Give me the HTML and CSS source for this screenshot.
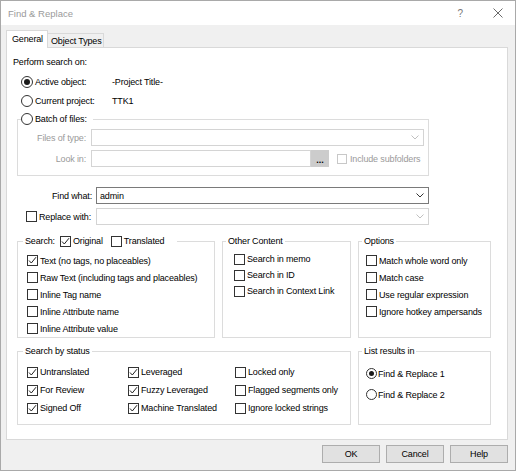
FILE: index.html
```html
<!DOCTYPE html>
<html>
<head>
<meta charset="utf-8">
<title>Find &amp; Replace</title>
<link rel="stylesheet" href="styles.css">
</head>
<body>
<div class="window">
  <div class="titlebar">
    <span class="title">Find &amp; Replace</span>
    <span class="help">?</span>
    <svg class="close" width="10" height="10" viewBox="0 0 10 10"><path d="M0.5 0.5 L9.5 9.5 M9.5 0.5 L0.5 9.5" stroke="#6a6a6a" stroke-width="1" fill="none"/></svg>
  </div>
  <div class="body">
    <div class="tabs">
      <div class="tab active">General</div>
      <div class="tab second">Object Types</div>
    </div>
    <div class="panel">
      <div class="heading">Perform search on:</div>
      <div class="scope">
        <span class="radio big checked"></span><span>Active object:</span><span class="scope-value">-Project Title-</span>
        <span class="radio big"></span><span>Current project:</span><span class="scope-value">TTK1</span>
      </div>

      <fieldset class="group batch">
        <legend class="legend"><span class="legend-row"><span class="radio big"></span><span class="gap2">Batch of files:</span></span></legend>
        <div class="batch-grid">
          <span class="field-label muted">Files of type:</span>
          <div class="combo disabled"><span></span><svg class="chev" width="8" height="5" viewBox="0 0 8 5"><path d="M0.5 0.5 L4 4 L7.5 0.5" stroke="#c0c0c0" fill="none"/></svg></div>
          <span class="field-label muted">Look in:</span>
          <div class="lookin">
            <div class="input disabled"></div>
            <div class="browse">...</div>
            <span class="check small disabled"></span><span class="muted">Include subfolders</span>
          </div>
        </div>
      </fieldset>

      <div class="find-grid">
        <span class="field-label">Find what:</span>
        <div class="combo"><span class="combo-text">admin</span><svg class="chev" width="8" height="5" viewBox="0 0 8 5"><path d="M0.5 0.5 L4 4 L7.5 0.5" stroke="#333" fill="none"/></svg></div>
        <span class="item replace"><span class="check"></span>Replace with:</span>
        <div class="combo disabled"><span></span><svg class="chev" width="8" height="5" viewBox="0 0 8 5"><path d="M0.5 0.5 L4 4 L7.5 0.5" stroke="#c0c0c0" fill="none"/></svg></div>
      </div>

      <div class="groups top-groups">
        <fieldset class="group">
          <legend class="legend legend-search"><span class="legend-row"><span class="search-word">Search:</span><span class="check checked"><svg width="9" height="9" viewBox="0 0 9 9"><path d="M1 4.5 L3.3 7 L8 1.2" stroke="#222" stroke-width="1" fill="none"/></svg></span><span class="legend-opt">Original</span><span class="check"></span><span class="legend-opt">Translated</span></span></legend>
          <div class="list search-list">
            <span class="item"><span class="check checked"><svg width="9" height="9" viewBox="0 0 9 9"><path d="M1 4.5 L3.3 7 L8 1.2" stroke="#222" stroke-width="1" fill="none"/></svg></span>Text (no tags, no placeables)</span>
            <span class="item"><span class="check"></span>Raw Text (including tags and placeables)</span>
            <span class="item"><span class="check"></span>Inline Tag name</span>
            <span class="item"><span class="check"></span>Inline Attribute name</span>
            <span class="item"><span class="check"></span>Inline Attribute value</span>
          </div>
        </fieldset>
        <fieldset class="group">
          <legend class="legend legend-small">Other Content</legend>
          <div class="list other-list">
            <span class="item"><span class="check"></span>Search in memo</span>
            <span class="item"><span class="check"></span>Search in ID</span>
            <span class="item"><span class="check"></span>Search in Context Link</span>
          </div>
        </fieldset>
        <fieldset class="group">
          <legend class="legend legend-small">Options</legend>
          <div class="list options-list">
            <span class="item"><span class="check"></span>Match whole word only</span>
            <span class="item"><span class="check"></span>Match case</span>
            <span class="item"><span class="check"></span>Use regular expression</span>
            <span class="item"><span class="check"></span>Ignore hotkey ampersands</span>
          </div>
        </fieldset>
      </div>

      <div class="groups bottom-groups">
        <fieldset class="group status">
          <legend class="legend">Search by status</legend>
          <div class="status-grid">
            <span class="item"><span class="check checked"><svg width="9" height="9" viewBox="0 0 9 9"><path d="M1 4.5 L3.3 7 L8 1.2" stroke="#222" stroke-width="1" fill="none"/></svg></span>Untranslated</span>
            <span class="item"><span class="check checked"><svg width="9" height="9" viewBox="0 0 9 9"><path d="M1 4.5 L3.3 7 L8 1.2" stroke="#222" stroke-width="1" fill="none"/></svg></span>Leveraged</span>
            <span class="item"><span class="check"></span>Locked only</span>
            <span class="item"><span class="check checked"><svg width="9" height="9" viewBox="0 0 9 9"><path d="M1 4.5 L3.3 7 L8 1.2" stroke="#222" stroke-width="1" fill="none"/></svg></span>For Review</span>
            <span class="item"><span class="check checked"><svg width="9" height="9" viewBox="0 0 9 9"><path d="M1 4.5 L3.3 7 L8 1.2" stroke="#222" stroke-width="1" fill="none"/></svg></span>Fuzzy Leveraged</span>
            <span class="item"><span class="check"></span>Flagged segments only</span>
            <span class="item"><span class="check checked"><svg width="9" height="9" viewBox="0 0 9 9"><path d="M1 4.5 L3.3 7 L8 1.2" stroke="#222" stroke-width="1" fill="none"/></svg></span>Signed Off</span>
            <span class="item"><span class="check checked"><svg width="9" height="9" viewBox="0 0 9 9"><path d="M1 4.5 L3.3 7 L8 1.2" stroke="#222" stroke-width="1" fill="none"/></svg></span>Machine Translated</span>
            <span class="item"><span class="check"></span>Ignore locked strings</span>
          </div>
        </fieldset>
        <fieldset class="group">
          <legend class="legend legend-small">List results in</legend>
          <div class="list results-list">
            <span class="item"><span class="radio checked"></span>Find &amp; Replace 1</span>
            <span class="item"><span class="radio"></span>Find &amp; Replace 2</span>
          </div>
        </fieldset>
      </div>
    </div>
    <div class="actions">
      <div class="btn">OK</div>
      <div class="btn">Cancel</div>
      <div class="btn">Help</div>
    </div>
  </div>
</div>
</body>
</html>
```

FILE: styles.css
```css
* { box-sizing: border-box; }
html, body { margin: 0; padding: 0; }
body {
  font-family: "Liberation Sans", Arial, sans-serif;
  font-size: 9px;
  letter-spacing: -0.15px;
  color: #000000;
  background: #ffffff;
}
.window {
  width: 516px;
  height: 471px;
  border: 1px solid #a9a9a9;
  display: flex;
  flex-direction: column;
  background: #f0f0f0;
}
.titlebar {
  height: 24px;
  flex: none;
  background: #ffffff;
  display: flex;
  align-items: center;
  padding-left: 7px;
}
.title { flex: 1; font-size: 9.5px; letter-spacing: 0; color: #9a9a9a; }
.help { color: #777; font-size: 10px; letter-spacing: 0; margin-right: 30px; }
.close { display: block; margin-right: 12px; }

.body {
  flex: 1;
  display: flex;
  flex-direction: column;
  padding: 0 7px 0 5px;
}
.tabs { height: 22px; flex: none; display: flex; align-items: flex-end; }
.tab {
  height: 14px;
  border: 1px solid #d9d9d9;
  border-bottom: none;
  background: #f0f0f0;
  display: flex;
  align-items: center;
  padding-left: 3px;
}
.tab.active {
  width: 42px;
  height: 18px;
  margin-bottom: -1px;
  padding-left: 5px;
  padding-bottom: 1px;
  background: #ffffff;
  position: relative;
  z-index: 1;
}
.tab.second { width: 57px; margin-left: -1px; }

.panel {
  height: 393px;
  flex: none;
  background: #ffffff;
  border: 1px solid #d9d9d9;
}
.heading { height: 14px; line-height: 14px; margin: 7px 0 0 6px; }
.scope {
  display: grid;
  grid-template-columns: 12px 75px auto;
  column-gap: 2px;
  grid-auto-rows: 19px;
  align-items: center;
  margin: 3px 0 0 14px;
}

.radio {
  width: 11px;
  height: 11px;
  border: 1px solid #333;
  border-radius: 50%;
  background: #fff;
  display: inline-flex;
  align-items: center;
  justify-content: center;
  flex: none;
  margin-right: 1px;
}
.radio.big { width: 12px; height: 12px; margin-right: 0; }
.radio.checked::after {
  content: "";
  width: 5px;
  height: 5px;
  border-radius: 50%;
  background: #1a1a1a;
}
.radio.big.checked::after { width: 6px; height: 6px; }

.check {
  width: 11px;
  height: 11px;
  border: 1px solid #333;
  background: #fff;
  display: inline-flex;
  align-items: center;
  justify-content: center;
  flex: none;
  margin-right: 2px;
}
.check svg { display: block; }
.check.small { width: 10px; height: 10px; }
.check.disabled { border-color: #c8c8c8; }

fieldset.group {
  margin: 0;
  padding: 0;
  min-width: 0;
  border: 1px solid #dcdcdc;
}
.legend {
  height: 14px;
  line-height: 14px;
  padding: 0 2px;
  margin-left: 5px;
}
.legend-row { display: flex; align-items: center; height: 14px; }
.gap2 { margin-left: 2px; }
.muted { color: #9a9a9a; }

.batch { width: 412px; margin: 2px 0 0 10px !important; }
.batch .legend { margin-left: 3px; padding: 0 6px 0 0; }
.batch-grid {
  display: grid;
  grid-template-columns: 68px 1fr;
  column-gap: 5px;
  row-gap: 4px;
  grid-auto-rows: 17px;
  align-items: center;
  padding: 3px 4px 8px 0;
}
.field-label { text-align: right; }
.combo {
  height: 17px;
  border: 1px solid #7a7a7a;
  background: #fff;
  display: flex;
  align-items: center;
  justify-content: space-between;
  padding: 0 4px 0 3px;
}
.combo.disabled { border-color: #d4d4d4; }
.chev { display: block; }
.lookin { display: flex; align-items: center; height: 17px; }
.input { width: 220px; height: 17px; border: 1px solid #d4d4d4; background: #fff; }
.browse {
  width: 18px;
  height: 17px;
  background: #cccccc;
  display: flex;
  align-items: center;
  justify-content: center;
  font-weight: bold;
  letter-spacing: 0;
  padding-top: 2px;
  margin-right: 8px;
}
.lookin .check { margin-right: 3px; }

.find-grid {
  display: grid;
  grid-template-columns: 75px 333px;
  column-gap: 4px;
  row-gap: 4px;
  grid-auto-rows: 17px;
  align-items: center;
  margin: 11px 0 0 10px;
}
.item { display: flex; align-items: center; white-space: nowrap; }
.replace { padding-left: 9px; }

.groups {
  display: grid;
  grid-template-columns: 198px 129px 133px;
  column-gap: 7px;
  margin-left: 10px;
}
.top-groups { margin-top: 9px; }
.bottom-groups { margin-top: 6px; }
.status { grid-column: 1 / span 2; }

.legend-search { padding-right: 13px; }
.search-word { margin-right: 5px; }
.legend-opt { margin-right: 8px; }
.legend-opt:last-child { margin-right: 0; }
.legend-small { margin-left: 3px; }

.list { display: grid; }
.search-list { grid-auto-rows: 17px; padding: 4px 0 0 9px; }
.other-list { grid-auto-rows: 16px; padding: 3px 0 0 11px; }
.options-list { grid-auto-rows: 17px; padding: 4px 0 0 7px; }
.results-list { grid-auto-rows: 21px; padding: 5px 0 0 7px; }

.status-grid {
  display: grid;
  grid-template-columns: 101px 107px auto;
  grid-auto-rows: 18px;
  padding: 5px 0 7px 9px;
}

.actions {
  display: flex;
  justify-content: flex-end;
  gap: 6px;
  margin-top: 5px;
}
.btn {
  width: 58px;
  height: 18px;
  border: 1px solid #adadad;
  background: #e1e1e1;
  display: flex;
  align-items: center;
  justify-content: center;
}
```
